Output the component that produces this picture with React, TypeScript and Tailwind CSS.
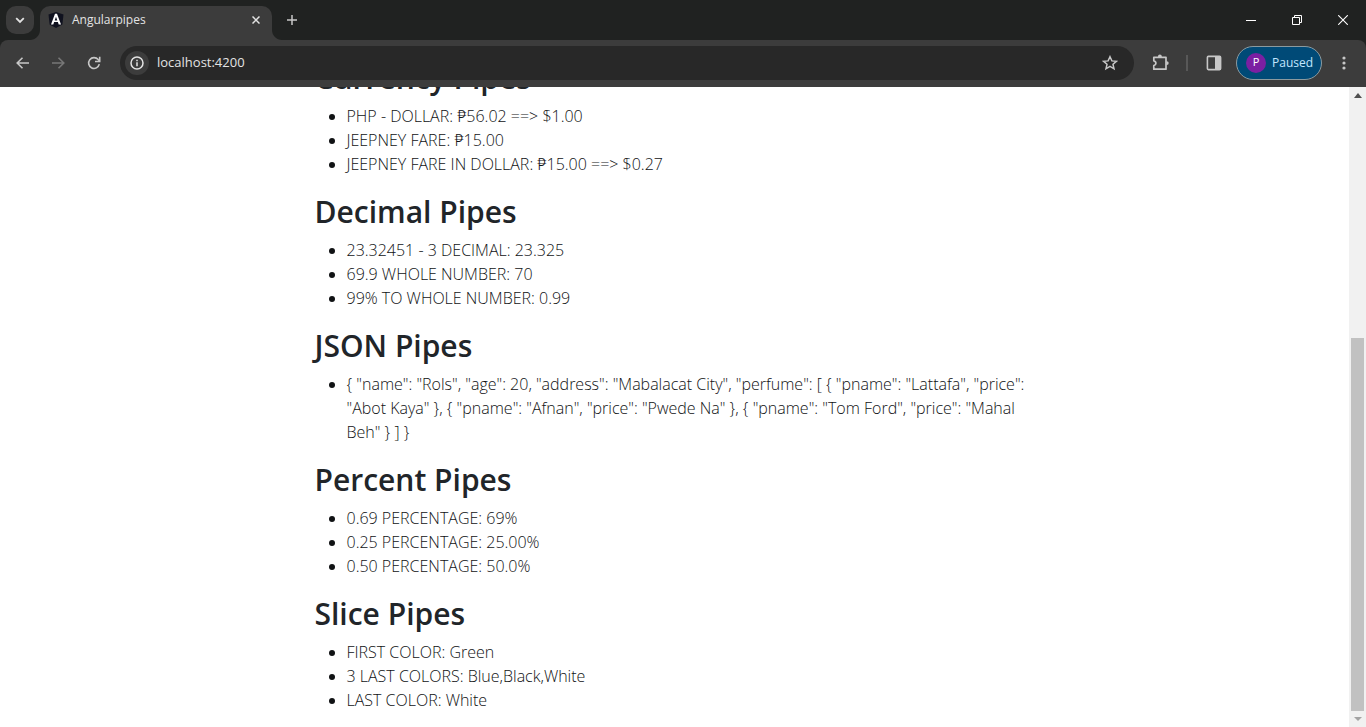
import React from 'react';

type Section = { title: string; items: string[] };

const sections: Section[] = [
  {
    title: 'Currency Pipes',
    items: [
      'PHP - DOLLAR: ₱56.02 ==> $1.00',
      'JEEPNEY FARE: ₱15.00',
      'JEEPNEY FARE IN DOLLAR: ₱15.00 ==> $0.27',
    ],
  },
  {
    title: 'Decimal Pipes',
    items: ['23.32451 - 3 DECIMAL: 23.325', '69.9 WHOLE NUMBER: 70', '99% TO WHOLE NUMBER: 0.99'],
  },
  {
    title: 'JSON Pipes',
    items: [
      '{ "name": "Rols", "age": 20, "address": "Mabalacat City", "perfume": [ { "pname": "Lattafa", "price": "Abot Kaya" }, { "pname": "Afnan", "price": "Pwede Na" }, { "pname": "Tom Ford", "price": "Mahal Beh" } ] }',
    ],
  },
  {
    title: 'Percent Pipes',
    items: ['0.69 PERCENTAGE: 69%', '0.25 PERCENTAGE: 25.00%', '0.50 PERCENTAGE: 50.0%'],
  },
  {
    title: 'Slice Pipes',
    items: ['FIRST COLOR: Green', '3 LAST COLORS: Blue,Black,White', 'LAST COLOR: White'],
  },
];

function TabStrip() {
  return (
    <div className="flex h-10 shrink-0 items-end bg-[#202221]">
      <button aria-label="Search tabs" className="mb-[6px] ml-[6px] flex h-7 w-7 items-center justify-center rounded-[10px] bg-[#3c3c3c]">
        <svg width="10" height="7" viewBox="0 0 10 7" fill="none" stroke="#e3e3e3" strokeWidth="1.8">
          <path d="M1.2 1.2 5 5l3.8-3.8" />
        </svg>
      </button>
      <div className="flex items-end">
        <svg className="-ml-2 shrink-0" width="14" height="10" viewBox="0 0 14 10">
          <path d="M14 0v10H4C9.5 10 14 5.500 14 0Z" fill="#3c3c3c" />
        </svg>
        <div className="flex h-[34px] w-[232px] items-center rounded-t-[10px] bg-[#3c3c3c] pr-2 pb-[6px] pl-2">
          <svg width="16" height="16" viewBox="0 0 16 16" className="shrink-0">
            <path d="M8 0 15.500 2.600 14.400 12.400 8 16 1.600 12.400.5 2.600Z" fill="#10121f" />
            <path d="M7 1.800 3 12.400h2.300l.8-2.300h3.800l.8 2.300H13L9 1.800ZM8 4.800l1.300 3.700H6.700Z" fill="#fff" fillRule="evenodd" />
          </svg>
          <span className="ml-2 flex-1 text-xs text-[#e3e3e3]">Angularpipes</span>
          <button aria-label="Close tab" className="flex h-4 w-4 items-center justify-center">
            <svg width="8" height="8" viewBox="0 0 8 8" stroke="#e3e3e3" strokeWidth="1.500">
              <path d="M.5.5l7 7M7.500.5l-7 7" />
            </svg>
          </button>
        </div>
        <svg className="shrink-0" width="10" height="10" viewBox="0 0 10 10">
          <path d="M0 0v10h10C4.500 10 0 5.500 0 0Z" fill="#3c3c3c" />
        </svg>
      </div>
      <button aria-label="New tab" className="mb-[15px] ml-[5px] flex h-[10px] w-[10px] items-center justify-center">
        <svg width="10" height="10" viewBox="0 0 10 10" stroke="#c7c7c7" strokeWidth="1.500">
          <path d="M5 0v10M0 5h10" />
        </svg>
      </button>
      <div className="ml-auto flex h-10">
        <button aria-label="Minimize" className="flex w-[46px] items-center justify-center">
          <svg width="10" height="10" viewBox="0 0 10 10" stroke="#fff">
            <path d="M0 5.500h10" />
          </svg>
        </button>
        <button aria-label="Restore" className="flex w-[46px] items-center justify-center">
          <svg width="10" height="10" viewBox="0 0 10 10" fill="none" stroke="#fff">
            <path d="M.5 2.500h7v7h-7ZM2.500 2.500v-2h7v7h-2" />
          </svg>
        </button>
        <button aria-label="Close window" className="flex w-[46px] items-center justify-center">
          <svg width="10" height="10" viewBox="0 0 10 10" stroke="#fff" strokeWidth="1.100">
            <path d="M.2.2l9.600 9.600M9.800.2.2 9.800" />
          </svg>
        </button>
      </div>
    </div>
  );
}

function Toolbar() {
  return (
    <div className="shrink-0 bg-[#202221]">
      <div className="flex h-[47px] items-center rounded-t-lg bg-[#3c3c3c] pb-[2px]">
        <div className="flex w-[120px] items-center pl-[14px]">
          <button aria-label="Back" className="mr-5 flex h-4 w-4 items-center justify-center">
            <svg width="13" height="12" viewBox="0 0 13 12" fill="none" stroke="#c7c7c7" strokeWidth="1.600">
              <path d="M13 6H1.500M6.500.7 1.200 6l5.300 5.300" />
            </svg>
          </button>
          <button aria-label="Forward" className="mr-5 flex h-4 w-4 items-center justify-center">
            <svg width="13" height="12" viewBox="0 0 13 12" fill="none" stroke="#777777" strokeWidth="1.600">
              <path d="M0 6h11.500M6.500.7 11.800 6l-5.300 5.300" />
            </svg>
          </button>
          <button aria-label="Reload" className="flex h-4 w-4 items-center justify-center">
            <svg width="14" height="14" viewBox="0 0 14 14" fill="none" stroke="#c7c7c7" strokeWidth="1.600">
              <path d="M12.300 8.200A5.400 5.400 0 1 1 11.200 3.600L12.500 5" />
              <path d="M12.700.8v4.700H8" />
            </svg>
          </button>
        </div>
        <div className="flex h-[34px] flex-1 items-center rounded-full bg-[#282828] pr-4 pl-[5px]">
          <button aria-label="Site information" className="flex h-6 w-6 shrink-0 items-center justify-center rounded-full bg-[#3c3c3c]">
            <svg width="14" height="14" viewBox="0 0 14 14" fill="none" stroke="#e3e3e3" strokeWidth="1.500">
              <circle cx="7" cy="7" r="6" />
              <path d="M7 6.200v4M7 3.700v1.500" />
            </svg>
          </button>
          <input
            aria-label="Address"
            defaultValue="localhost:4200"
            className="ml-2 min-w-0 flex-1 bg-transparent text-[13px] text-[#e3e3e3] outline-none"
          />
          <button aria-label="Bookmark this tab">
            <svg width="16" height="16" viewBox="0 0 16 16" fill="none" stroke="#c7c7c7" strokeWidth="1.500">
              <path d="M8 1.700 9.900 5.900l4.500.4L11 9.300l1 4.500-4-2.400-4 2.400 1-4.500L1.600 6.300l4.500-.4Z" />
            </svg>
          </button>
        </div>
        <button aria-label="Extensions" className="ml-[18px]">
          <svg width="18" height="18" viewBox="0 0 18 18" fill="none" stroke="#c7c7c7" strokeWidth="1.700" strokeLinejoin="round">
            <path d="M1.800 3.300H14v11.900H1.800v-3.500c1.300-.3 2.100-1.200 2.100-2.400s-.8-2.200-2.100-2.500Z" />
            <path d="M6 3V2.300a1.900 1.900 0 0 1 3.800 0V3ZM14.300 7.200h.5a1.900 1.900 0 0 1 0 3.800h-.5Z" fill="#c7c7c7" stroke="none" />
          </svg>
        </button>
        <span className="ml-4 h-4 w-[2px] bg-[#585858]" />
        <button aria-label="Side panel" className="ml-[18px]">
          <svg width="16" height="16" viewBox="0 0 16 16">
            <rect x="1.400" y="1.400" width="13.200" height="13.200" rx="1" fill="none" stroke="#c7c7c7" strokeWidth="1.600" />
            <path d="M9 1h6v14H9Z" fill="#c7c7c7" />
          </svg>
        </button>
        <button className="ml-[14px] flex h-[34px] w-[86px] items-center rounded-full border border-[#8b9a9f] bg-[#004a77] pl-[9px] text-xs text-[#c2e7ff]">
          <span className="mr-[6px] flex h-5 w-5 items-center justify-center rounded-full bg-[#7b1fa2] text-[11px] text-white">P</span>
          Paused
        </button>
        <button aria-label="Menu" className="mr-[14px] ml-[14px] flex w-4 justify-center">
          <svg width="4" height="14" viewBox="0 0 4 14" fill="#c7c7c7">
            <circle cx="2" cy="2" r="1.600" />
            <circle cx="2" cy="7" r="1.600" />
            <circle cx="2" cy="12" r="1.600" />
          </svg>
        </button>
      </div>
    </div>
  );
}

function Scrollbar() {
  return (
    <div className="flex w-[17px] shrink-0 flex-col items-center bg-[#f1f1f1]">
      <svg className="mt-[6px] mb-auto" width="8" height="5" viewBox="0 0 8 5" fill="#505050">
        <path d="M4 0 8 5H0Z" />
      </svg>
      <div className="h-[373px] w-[13px] bg-[#c1c1c1]" />
      <svg className="my-[6px]" width="8" height="4" viewBox="0 0 8 4" fill="#a3a3a3">
        <path d="M0 0h8L4 4Z" />
      </svg>
    </div>
  );
}

export default function App() {
  return (
    <div className="flex h-screen flex-col overflow-hidden bg-white font-['Open_Sans','Noto_Sans',sans-serif]">
      <TabStrip />
      <Toolbar />
      <div className="flex min-h-0 flex-1">
        <main className="flex min-w-0 flex-1 flex-col justify-end overflow-hidden pb-[15px] text-[#212529]">
          <div className="mx-auto flex w-full max-w-[720px] flex-col gap-4">
            {sections.map((section) => (
              <section key={section.title}>
                <h2 className="mb-[6px] text-[30px] leading-10 font-semibold">{section.title}</h2>
                <ul className="list-disc pl-8 text-base leading-6 font-light text-[#101214]">
                  {section.items.map((item) => (
                    <li key={item}>{item}</li>
                  ))}
                </ul>
              </section>
            ))}
          </div>
        </main>
        <Scrollbar />
      </div>
    </div>
  );
}
